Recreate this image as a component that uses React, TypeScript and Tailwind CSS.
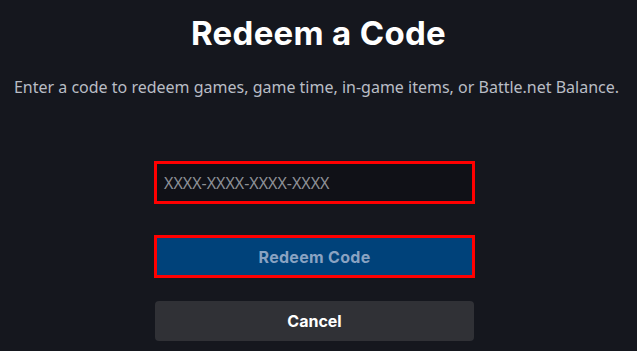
import React from "react";

export default function App() {
  return (
    <div className="w-[637px] h-[351px] bg-[#15171e] flex flex-col items-center overflow-hidden">
      <h1 className="mt-[13px] text-[33px] leading-[40px] font-bold text-white tracking-[0.3px]" style={{ fontFamily: "Inter, 'Noto Sans', sans-serif" }}>
        Redeem a Code
      </h1>
      <p className="mt-[24px] pr-[4px] text-[16px] leading-[21px] text-[#b9bdc5]" style={{ fontFamily: "'Noto Sans', sans-serif" }}>
        Enter a code to redeem games, game time, in-game items, or Battle.net Balance.
      </p>
      <div className="w-full pr-[8px] flex justify-center">
        <div className="mt-[63px] w-[321px] flex flex-col">
          <div className="h-[43px] border-[3px] border-[#ff0000] bg-[#101117] flex items-center px-[7px]">
            <span className="text-[16px] text-[#8d9096]" style={{ fontFamily: "'Noto Sans', sans-serif" }}>XXXX-XXXX-XXXX-XXXX</span>
          </div>
          <div className="mt-[31px] h-[43px] border-[3px] border-[#ff0000] bg-[#00427a] flex items-center justify-center">
            <span className="text-[16px] font-bold text-[#8aa3c2] tracking-[0.3px]" style={{ fontFamily: "Inter, 'Noto Sans', sans-serif" }}>Redeem Code</span>
          </div>
          <div className="mt-[23px] mx-[1px] h-[40px] rounded-[4px] bg-[#303136] flex items-center justify-center">
            <span className="text-[16px] font-bold text-white" style={{ fontFamily: "Inter, 'Noto Sans', sans-serif" }}>Cancel</span>
          </div>
        </div>
      </div>
    </div>
  );
}
